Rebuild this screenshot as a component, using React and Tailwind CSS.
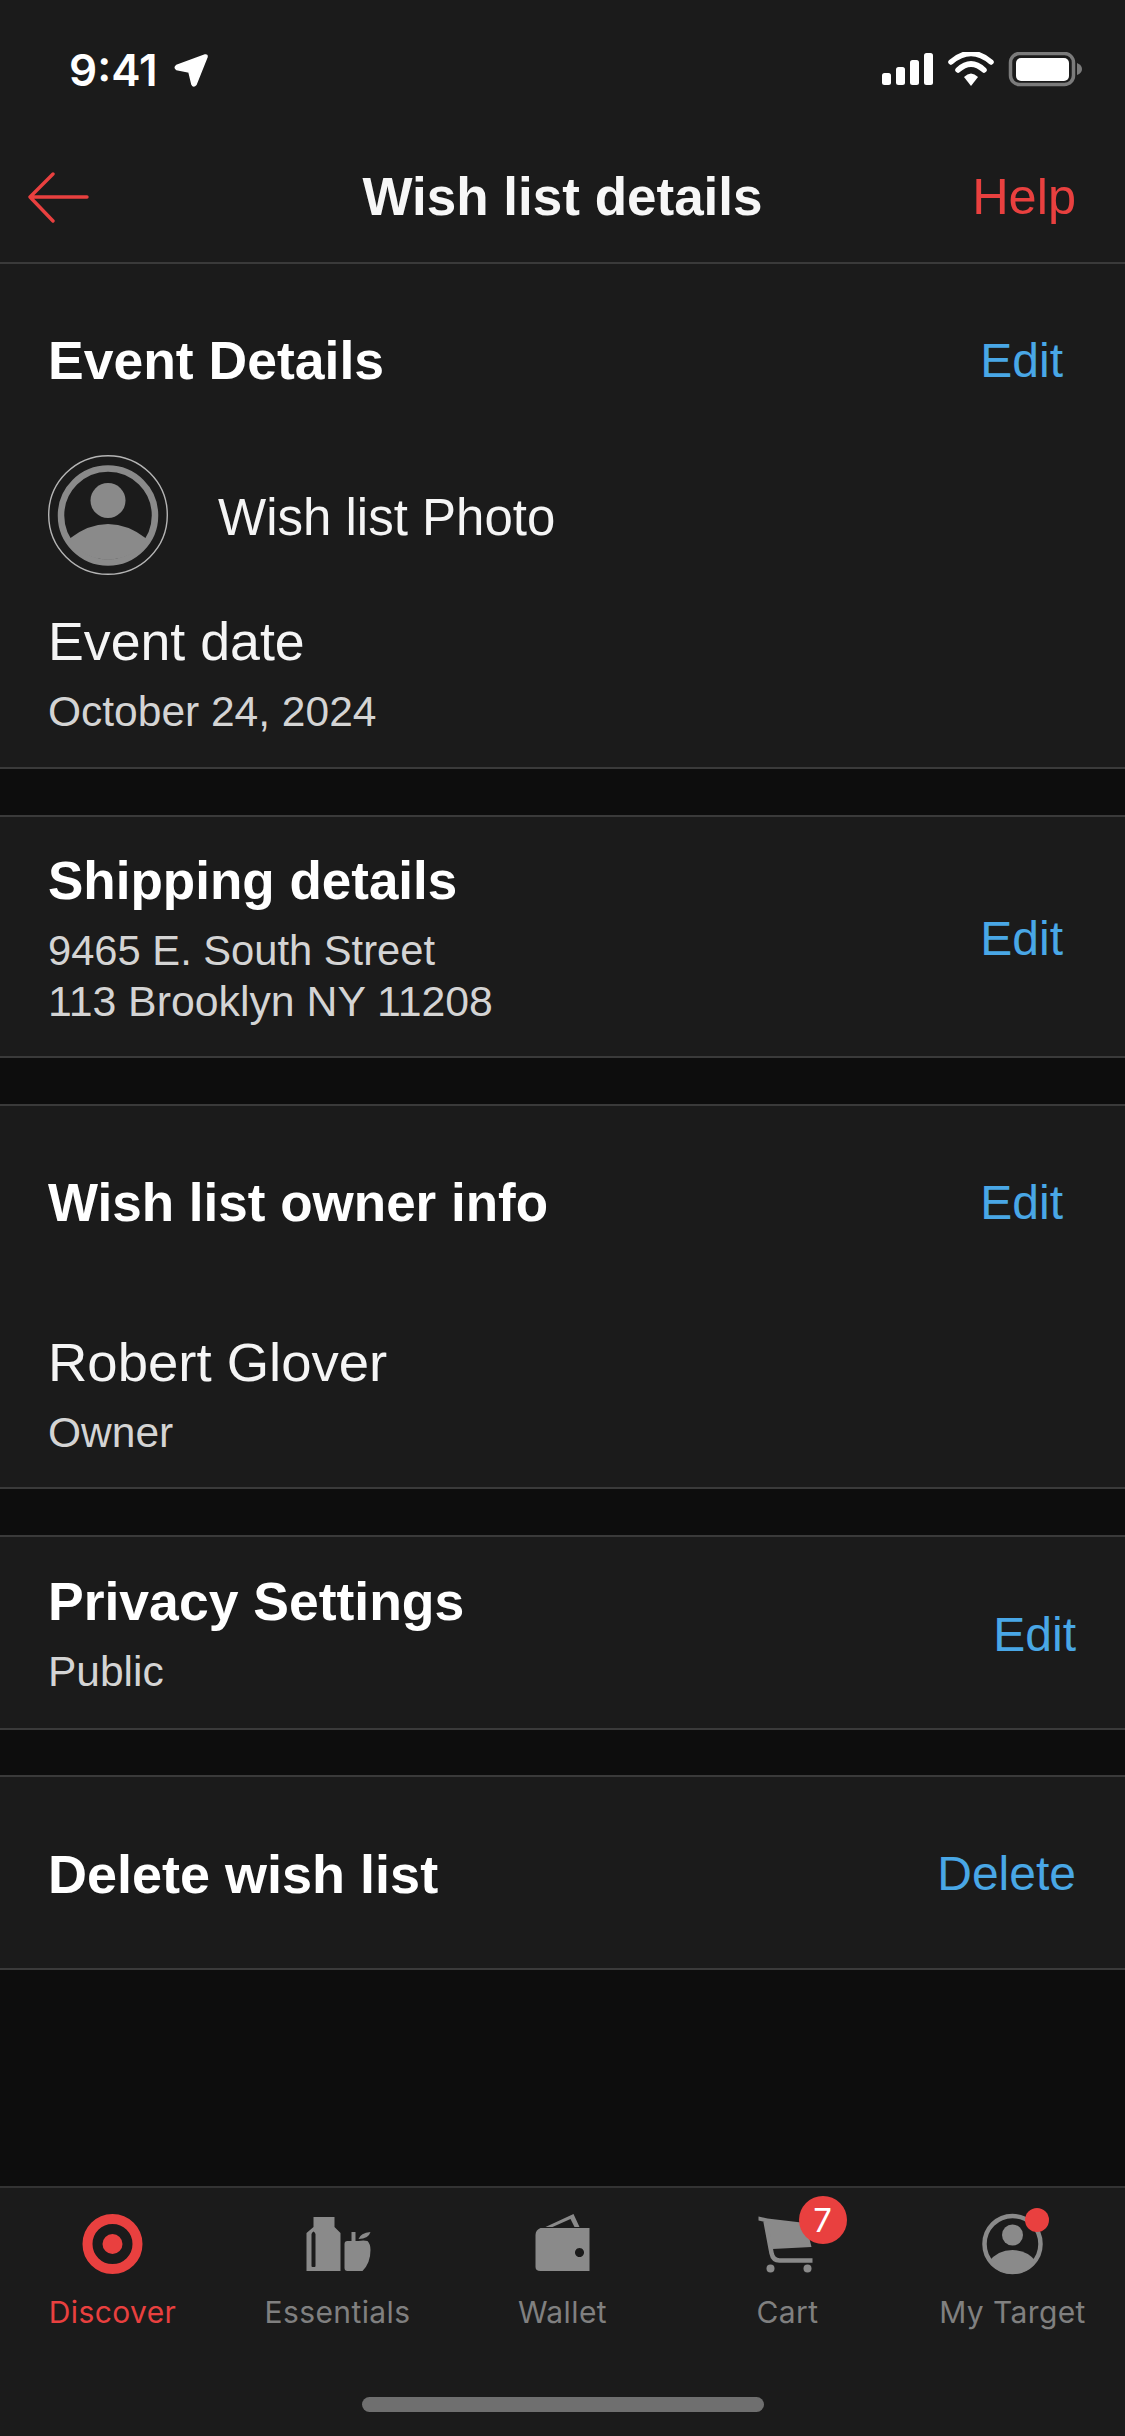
import React from "react";

const sans = "font-['Liberation_Sans',Arial,sans-serif]";

function StatusBar() {
  return (
    <div className="flex h-[131px] items-start justify-between pt-[52px] pl-[69px] pr-[42px]">
      <div className="flex items-center gap-[15px]">
        <span className="font-['Inter',sans-serif] text-[44px] leading-[35px] font-semibold text-white">9:41</span>
        <svg width="36" height="36" viewBox="172 52 36 36" className="block">
          <path d="M175.5 65.5 L204 55 Q206.5 54.5 206 57 L195 84.5 Q192.5 87.5 191 84.5 L188 72 L175.5 69.5 Q173 67.5 175.5 65.5 Z" fill="#fff" stroke="#fff" strokeWidth="1.5" strokeLinejoin="round" />
        </svg>
      </div>
      <svg width="201" height="36" viewBox="882 52 201 36" className="block">
        <rect x="882" y="73" width="9" height="12" rx="2.5" fill="#fff" />
        <rect x="896" y="67" width="9" height="18" rx="2.5" fill="#fff" />
        <rect x="910" y="60" width="9" height="25" rx="2.5" fill="#fff" />
        <rect x="924" y="53" width="9" height="32" rx="2.5" fill="#fff" />
        <path d="M951 62 Q971 45 991 62" fill="none" stroke="#fff" strokeWidth="5.5" strokeLinecap="round" />
        <path d="M958 70 Q971 58 984 70" fill="none" stroke="#fff" strokeWidth="5.5" strokeLinecap="round" />
        <path d="M964 77 Q971 70 978 77 L971 86 Z" fill="#fff" />
        <rect x="1010.5" y="53.5" width="63" height="31" rx="9" fill="none" stroke="#7b7b7b" strokeWidth="3.5" />
        <rect x="1016" y="58" width="53" height="23" rx="5" fill="#fff" />
        <path d="M1077 63 Q1082 65 1082 69 Q1082 73 1077 75 Z" fill="#7b7b7b" />
      </svg>
    </div>
  );
}

function NavBar() {
  return (
    <div className="relative flex h-[133px] items-center justify-between border-b-2 border-[#3a3a3a] pl-[28px] pr-[49px]">
      <svg width="62" height="52" viewBox="28 171 62 52" className="block">
        <path d="M87 197 H31 M53 174 L30 197 L53 221" fill="none" stroke="#e9403f" strokeWidth="3.4" strokeLinecap="round" strokeLinejoin="round" />
      </svg>
      <span className="absolute left-0 right-0 text-center text-[53px] leading-[60px] font-bold text-[#f7f7f7]">Wish list details</span>
      <span className="text-[50.5px] leading-[60px] text-[#e9403f]">Help</span>
    </div>
  );
}

function Title({ children, size = "text-[53.5px]" }) {
  return <div className={`${size} leading-[60px] font-bold text-white`}>{children}</div>;
}
function Big({ children, size = "text-[54px]" }) {
  return <div className={`${size} leading-[60px] text-[#f5f5f5]`}>{children}</div>;
}
function Sub({ children, size = "text-[42.5px]" }) {
  return <div className={`${size} leading-[51px] text-[#d4d4d4]`}>{children}</div>;
}
function Link({ children }) {
  return <span className="text-[48px] leading-[60px] text-[#49a7e6]">{children}</span>;
}

function Avatar() {
  return (
    <svg width="120" height="120" viewBox="0 0 120 120" className="block shrink-0">
      <circle cx="60" cy="60" r="59.3" fill="none" stroke="#b5b5b5" strokeWidth="1.4" />
      <circle cx="60" cy="60.5" r="47" fill="none" stroke="#8a8a8a" strokeWidth="6.5" />
      <circle cx="60" cy="45.5" r="17.5" fill="#8a8a8a" />
      <path d="M21 84 Q40 69 60 69 Q80 69 99 84 A47 47 0 0 1 21 84 Z" fill="#8a8a8a" />
    </svg>
  );
}

function Tab({ label, active, children }) {
  return (
    <div className="relative flex flex-col items-center">
      <div className="relative h-[64px] w-[80px]">{children}</div>
      <div className={`mt-[18px] font-['Inter',sans-serif] text-[30px] leading-[36px] tracking-[0.4px] ${active ? "text-[#e9403f]" : "text-[#808080]"}`}>
        {label}
      </div>
    </div>
  );
}

function TabBar() {
  return (
    <div className="relative h-[250px] shrink-0 border-t-2 border-[#333333] bg-[#1b1b1b]">
      <div className="grid grid-cols-5 pt-[24px]">
        <Tab label="Discover" active>
          <svg width="80" height="64" viewBox="72.5 2212 80 64" className="block">
            <circle cx="112" cy="2244" r="25" fill="none" stroke="#e9403f" strokeWidth="10" />
            <circle cx="112" cy="2244" r="10" fill="#e9403f" />
          </svg>
        </Tab>
        <Tab label="Essentials">
          <svg width="80" height="64" viewBox="297.5 2212 80 64" className="block">
            <path fillRule="evenodd" d="M313 2217 H334 V2227 L340 2233 V2271 H306 V2233 L313 2227 Z M311 2234 V2266 Q311 2267 312 2267 H314 Q315 2267 315 2266 V2234 Q313 2229 311 2234 Z" fill="#8a8a8a" />
            <path d="M344 2244 Q344 2241 347 2241 H351 V2232 H355 V2241 H358 Q363 2240 367 2241 Q370 2244 370 2250 Q370 2263 362 2271 H347 Q344 2271 344 2268 Z" fill="#8a8a8a" />
            <path d="M358 2239 Q360 2233 370 2232 Q368 2239 358 2239 Z" fill="#8a8a8a" />
          </svg>
        </Tab>
        <Tab label="Wallet">
          <svg width="80" height="64" viewBox="522.5 2212 80 64" className="block">
            <path fillRule="evenodd" d="M535 2235 Q535 2230 540 2228 H589 V2271 H540 Q535 2271 535 2267 Z M579 2248 a4.5 4.5 0 1 0 0.01 0 Z" fill="#8a8a8a" />
            <path d="M545 2227 L573 2214 L579 2227 H574 L570 2219 L552 2227 Z" fill="#8a8a8a" />
          </svg>
        </Tab>
        <Tab label="Cart">
          <svg width="80" height="64" viewBox="747.5 2212 80 64" className="block">
            <path d="M758 2216.5 L767 2218.5 L805 2223 L811 2247 L772 2249 L765 2222 L758 2220.5 Z" fill="#8a8a8a" />
            <path d="M765 2221 L771 2253 Q772.5 2260.5 779 2260.5 H812" fill="none" stroke="#8a8a8a" strokeWidth="4.5" />
            <circle cx="770" cy="2268.5" r="4" fill="#8a8a8a" />
            <circle cx="807" cy="2268.5" r="4" fill="#8a8a8a" />
          </svg>
          <div className="absolute left-[51px] top-[-16px] flex h-[48px] w-[48px] items-center justify-center rounded-full bg-[#e9403f] font-['Inter',sans-serif] text-[33px] leading-none text-white">7</div>
        </Tab>
        <Tab label="My Target">
          <svg width="80" height="64" viewBox="972.5 2212 80 64" className="block">
            <circle cx="1012" cy="2244" r="28" fill="none" stroke="#8a8a8a" strokeWidth="4.5" />
            <circle cx="1012" cy="2235" r="10.5" fill="#8a8a8a" />
            <path d="M988 2262 Q997 2250 1012 2250 Q1027 2250 1036 2262 Q1026 2274 1012 2274 Q998 2274 988 2262 Z" fill="#8a8a8a" />
          </svg>
          <div className="absolute left-[52px] top-[-4px] h-[24px] w-[24px] rounded-full bg-[#e9403f]" />
        </Tab>
      </div>
      <div className="absolute left-[362px] top-[209px] h-[15px] w-[402px] rounded-full bg-[#6f6f6f]" />
    </div>
  );
}

const section = "border-b-2 border-[#3a3a3a] bg-[#1b1b1b]";

export default function App() {
  return (
    <div className={`flex h-[2436px] w-[1125px] flex-col overflow-hidden bg-[#0d0d0d] ${sans}`}>
      <div className="bg-[#1b1b1b]">
        <StatusBar />
        <NavBar />
      </div>
      <div className="flex-1">
        <div className={`${section} h-[505px] pl-[48px] pr-[62px] pt-[67px]`}>
          <div className="flex items-center justify-between">
            <Title>Event Details</Title>
            <Link>Edit</Link>
          </div>
          <div className="mt-[64px] flex items-center gap-[50px]">
            <Avatar />
            <div className="pt-[5px] text-[51px] leading-[60px] text-[#f5f5f5]">Wish list Photo</div>
          </div>
          <div className="mt-[36px]"><Big size="text-[53.7px]">Event date</Big></div>
          <div className="mt-[15px]"><Sub>October 24, 2024</Sub></div>
        </div>

        <div className={`${section} mt-[46px] flex h-[243px] items-center justify-between border-t-2 pl-[48px] pr-[62px] pt-[5px]`}>
          <div>
            <Title size="text-[53px]">Shipping details</Title>
            <div className="mt-[14px]">
              <Sub size="text-[41.7px]">9465 E. South Street</Sub>
              <Sub size="text-[42.8px]">113 Brooklyn NY 11208</Sub>
            </div>
          </div>
          <Link>Edit</Link>
        </div>

        <div className={`${section} mt-[46px] h-[385px] border-t-2 pl-[48px] pr-[62px] pt-[67px]`}>
          <div className="flex items-center justify-between">
            <Title size="text-[53px]">Wish list owner info</Title>
            <Link>Edit</Link>
          </div>
          <div className="mt-[100px]"><Big size="text-[54.5px]">Robert Glover</Big></div>
          <div className="mt-[14px]"><Sub>Owner</Sub></div>
        </div>

        <div className={`${section} mt-[46px] flex h-[195px] items-center justify-between border-t-2 pl-[48px] pr-[49px] pt-[3px]`}>
          <div>
            <Title>Privacy Settings</Title>
            <div className="mt-[14px]"><Sub>Public</Sub></div>
          </div>
          <div className="pt-[2px]"><Link>Edit</Link></div>
        </div>

        <div className={`${section} mt-[45px] flex h-[195px] items-center justify-between border-t-2 pl-[48px] pr-[49px] pt-[2px]`}>
          <Title size="text-[54px]">Delete wish list</Title>
          <Link>Delete</Link>
        </div>
      </div>
      <TabBar />
    </div>
  );
}
